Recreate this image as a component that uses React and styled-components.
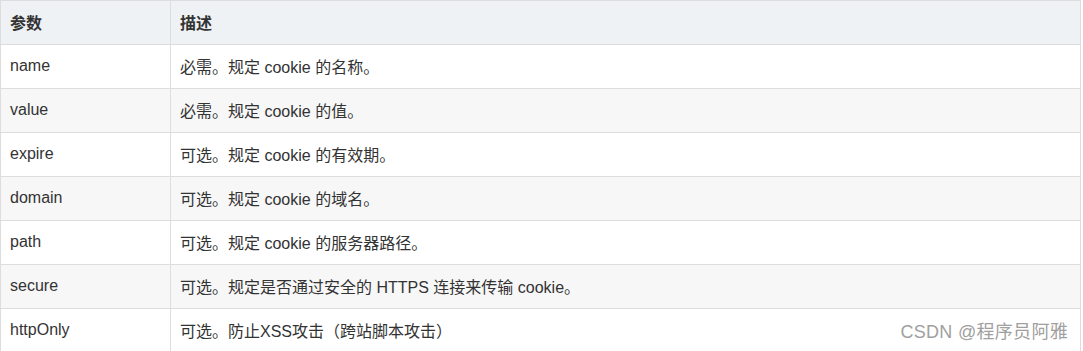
import React from 'react';
import styled, { createGlobalStyle } from 'styled-components';

const GlobalStyle = createGlobalStyle`
    body {
        margin: 0;
        background: #fff;
        font-family: "Microsoft YaHei", "Liberation Sans", Arial, "Noto Sans CJK SC", sans-serif;
    }
`;

const Wrapper = styled.div`
    position: relative;
    width: 1081px;
`;

const Table = styled.table`
    width: 1081px;
    border-collapse: collapse;
    font-size: 16px;
    color: #333;
`;

const HeadCell = styled.th`
    background: #eff2f5;
    text-align: left;
    font-weight: bold;
    height: 44px;
    padding: 0 9px 2px;
    border: 1px solid #dddddd;
    box-sizing: border-box;
    width: ${p => p.$width || 'auto'};
`;

const Row = styled.tr`
    background: ${p => (p.$striped ? '#f7f7f7' : '#ffffff')};
`;

const Cell = styled.td`
    height: 44px;
    padding: 0 9px 2px;
    border: 1px solid #dddddd;
    box-sizing: border-box;
`;

const Watermark = styled.div`
    position: absolute;
    right: 13px;
    bottom: 10px;
    font-size: 18px;
    color: #a0a0a0;
    letter-spacing: 0.3px;
`;

const params = [
    ['name', '必需。规定 cookie 的名称。'],
    ['value', '必需。规定 cookie 的值。'],
    ['expire', '可选。规定 cookie 的有效期。'],
    ['domain', '可选。规定 cookie 的域名。'],
    ['path', '可选。规定 cookie 的服务器路径。'],
    ['secure', '可选。规定是否通过安全的 HTTPS 连接来传输 cookie。'],
    ['httpOnly', '可选。防止XSS攻击（跨站脚本攻击）'],
];

const App = () => (
    <React.Fragment>
        <GlobalStyle />
        <Wrapper>
            <Table>
                <thead>
                    <tr>
                        <HeadCell $width='170px'>参数</HeadCell>
                        <HeadCell>描述</HeadCell>
                    </tr>
                </thead>
                <tbody>
                    {params.map(([name, desc], index) => (
                        <Row key={name} $striped={index % 2 === 1}>
                            <Cell>{name}</Cell>
                            <Cell>{desc}</Cell>
                        </Row>
                    ))}
                </tbody>
            </Table>
            <Watermark>CSDN @程序员阿雅</Watermark>
        </Wrapper>
    </React.Fragment>
);

export default App;
